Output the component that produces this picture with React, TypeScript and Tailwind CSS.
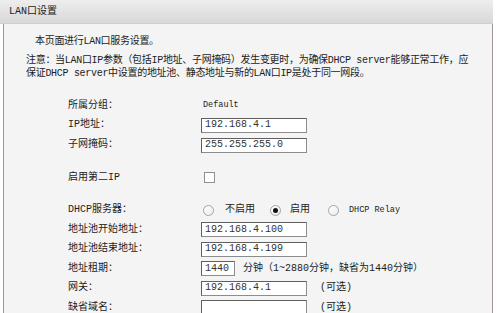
// LAN口设置 — router admin page
const font = "font-['Liberation_Mono','Noto_Sans_CJK_SC',monospace]"

function Field({ value, w = 'w-[106px]' }: { value?: string; w?: string }) {
  return (
    <div
      className={`${w} h-[15px] bg-white border border-[#8c8c8c] border-t-[#5f5f5f] border-l-[#5f5f5f] flex items-center pl-[3px] text-[10px] leading-none text-[#333]`}
    >
      {value}
    </div>
  )
}

function Radio({ checked = false }: { checked?: boolean }) {
  return (
    <span className="w-[11px] h-[11px] rounded-full border border-[#a3a3a3] bg-gradient-to-br from-white to-[#ececec] flex items-center justify-center shrink-0">
      {checked && <span className="w-[5px] h-[5px] rounded-full bg-[#111]" />}
    </span>
  )
}

function Row({ label, h = 'h-[19.5px]', children }: { label: string; h?: string; children?: React.ReactNode }) {
  return (
    <div className={`flex items-center ${h}`}>
      <div className="w-[133px] shrink-0 text-[10px] leading-none text-[#1c1c1c]">{label}</div>
      <div className="flex items-center">{children}</div>
    </div>
  )
}

export default function App() {
  return (
    <div className={`w-[500px] h-[313px] overflow-hidden bg-white ${font}`}>
      <div className="w-[493px]">
        {/* Title bar */}
        <div className="h-[24px] bg-gradient-to-b from-[#eeeeee] to-[#d8d8d8] border-b border-[#d0d0d0] flex items-center pl-[9px] text-[10px] text-[#1c1c1c]">
          LAN口设置
        </div>

        {/* Body */}
        <div className="ml-[3px] w-[490px] h-[289px] border-l border-r border-[#a39494] bg-[#f4f4f4] pt-[11px] text-[#1c1c1c]">
          <div className="pl-[31px] text-[10px] leading-[13px] tracking-[-0.3px]">本页面进行LAN口服务设置。</div>
          <div className="mt-[6px] pl-[22px] text-[10px] leading-[13px] tracking-[-0.3px]">
            注意：当LAN口IP参数（包括IP地址、子网掩码）发生变更时，为确保DHCP server能够正常工作，应
            <br />
            保证DHCP server中设置的地址池、静态地址与新的LAN口IP是处于同一网段。
          </div>

          <div className="pl-[64px] mt-[16px]">
            <Row label="所属分组：" h="h-[19px]">
              <span className="pl-[2px] text-[8.5px] leading-none">Default</span>
            </Row>
            <Row label="IP地址：" h="h-[20px]">
              <Field value="192.168.4.1" />
            </Row>
            <Row label="子网掩码：" h="h-[20px]">
              <Field value="255.255.255.0" />
            </Row>

            <div className="mt-[12px]">
              <Row label="启用第二IP" h="h-[21px]">
                <span className="ml-[3px] w-[11px] h-[11px] border border-[#8f8f8f] bg-white" />
              </Row>
            </div>

            <div className="mt-[12px]">
              <Row label="DHCP服务器：" h="h-[20px]">
                <div className="flex items-center text-[10px] leading-none">
                  <div className="w-[69px] flex items-center pl-[2px]">
                    <Radio />
                    <span className="ml-[11px]">不启用</span>
                  </div>
                  <div className="w-[58px] flex items-center">
                    <Radio checked />
                    <span className="ml-[9px]">启用</span>
                  </div>
                  <div className="flex items-center">
                    <Radio />
                    <span className="ml-[10px] text-[8.5px]">DHCP Relay</span>
                  </div>
                </div>
              </Row>
              <Row label="地址池开始地址：">
                <Field value="192.168.4.100" />
              </Row>
              <Row label="地址池结束地址：">
                <Field value="192.168.4.199" />
              </Row>
              <Row label="地址租期：">
                <Field value="1440" w="w-[34px]" />
                <span className="ml-[8px] text-[10px] leading-none">分钟（1~2880分钟，缺省为1440分钟）</span>
              </Row>
              <Row label="网关：">
                <Field value="192.168.4.1" />
                <span className="ml-[13px] text-[10px] leading-none">(可选)</span>
              </Row>
              <Row label="缺省域名：">
                <Field />
                <span className="ml-[13px] text-[10px] leading-none">(可选)</span>
              </Row>
            </div>
          </div>
        </div>
      </div>
    </div>
  )
}
